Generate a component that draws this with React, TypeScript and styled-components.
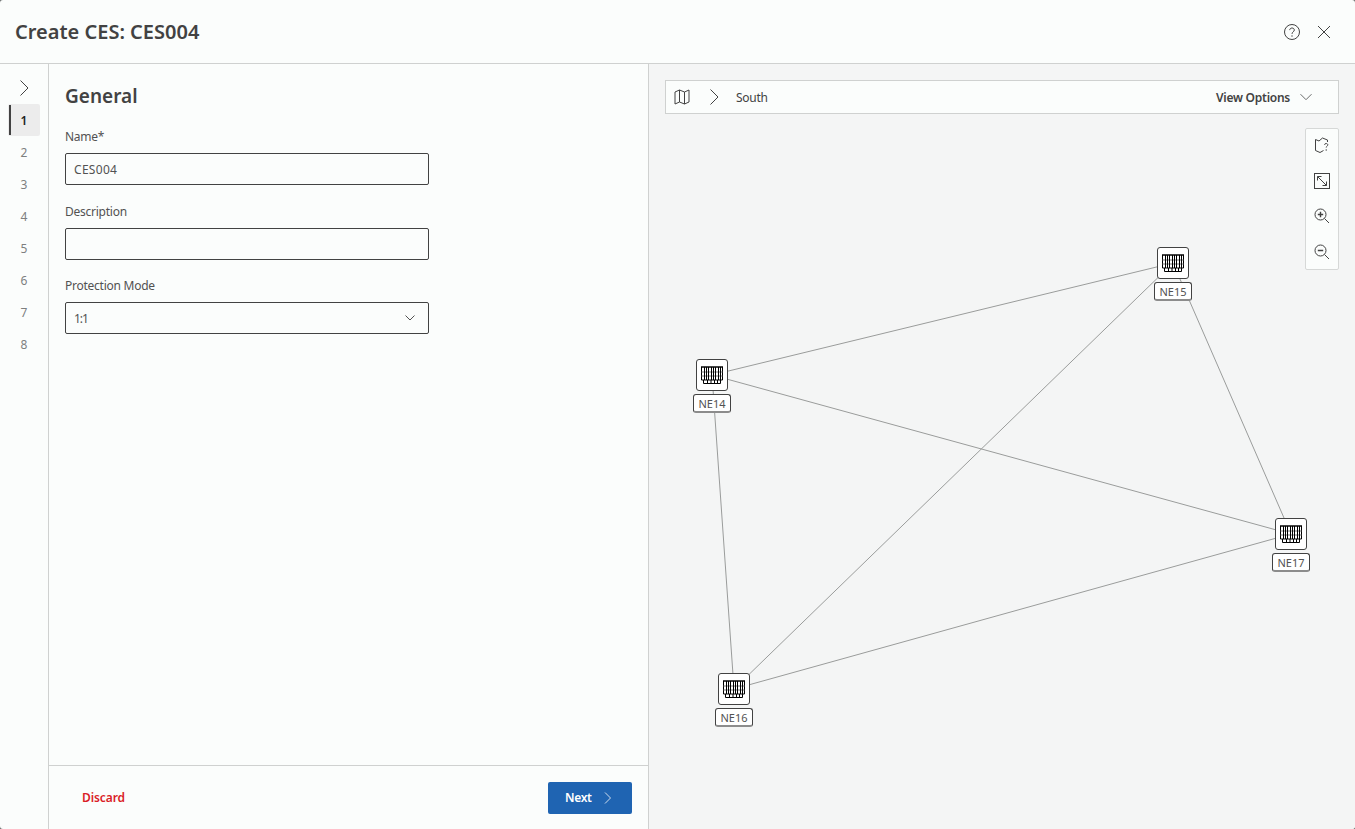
import React from 'react';
import styled, { createGlobalStyle } from 'styled-components';

const GlobalStyle = createGlobalStyle`
  html, body {
    margin: 0;
    padding: 0;
    height: 100%;
    background: #6b6e6e;
  }
  #root {
    height: 100%;
  }
  * {
    box-sizing: border-box;
  }
`;

const Dialog = styled.div`
  width: 1355px;
  height: 829px;
  display: flex;
  flex-direction: column;
  overflow: hidden;
  border-radius: 3px;
  background: #fbfdfc;
  color: #424242;
  font-family: 'Noto Sans', sans-serif;
`;

const Header = styled.header`
  height: 64px;
  flex: none;
  display: flex;
  align-items: center;
  justify-content: space-between;
  padding: 0 22px 0 15px;
  border-bottom: 1px solid #cfd1d0;
`;

const Title = styled.h1`
  margin: 0;
  font-size: 20px;
  line-height: 28px;
  font-weight: 600;
  color: #424242;
`;

const HeaderActions = styled.div`
  display: flex;
  align-items: center;
  gap: 14px;
`;

const IconButton = styled.span`
  display: flex;
  width: 18px;
  height: 18px;
  align-items: center;
  justify-content: center;
  color: #424242;
`;

const Body = styled.div`
  flex: 1;
  min-height: 0;
  display: flex;
`;

const StepRail = styled.nav`
  width: 49px;
  flex: none;
  border-right: 1px solid #cfd1d0;
  display: flex;
  flex-direction: column;
  align-items: center;
  padding: 8px 0 0 0;
`;

const RailToggle = styled.span`
  height: 32px;
  display: flex;
  align-items: center;
  justify-content: center;
  color: #424242;
`;

const Step = styled.div<{ $active?: boolean }>`
  position: relative;
  width: 32px;
  height: 32px;
  display: flex;
  align-items: center;
  justify-content: center;
  font-size: 12px;
  border-radius: 2px;
  font-weight: ${p => (p.$active ? 600 : 400)};
  color: ${p => (p.$active ? '#222' : '#7d7f7f')};
  background: ${p => (p.$active ? '#ececec' : 'transparent')};

  &::before {
    content: '';
    display: ${p => (p.$active ? 'block' : 'none')};
    position: absolute;
    left: 1px;
    top: 1px;
    bottom: 1px;
    width: 2px;
    background: #424242;
  }
`;

const FormPanel = styled.section`
  width: 600px;
  flex: none;
  border-right: 1px solid #cfd1d0;
  display: flex;
  flex-direction: column;
`;

const FormBody = styled.div`
  flex: 1;
  padding: 19px 16px 0;
`;

const SectionTitle = styled.h2`
  margin: 0 0 20px;
  font-size: 19px;
  line-height: 26px;
  font-weight: 600;
  color: #424242;
`;

const Field = styled.div`
  margin-bottom: 18.67px;
  width: 364px;
`;

const FieldLabel = styled.label`
  display: block;
  font-size: 12px;
  line-height: 16px;
  margin-bottom: 8px;
  letter-spacing: -0.25px;
  color: #525252;
`;

const Control = styled.div`
  height: 32px;
  display: flex;
  align-items: center;
  justify-content: space-between;
  padding: 0 12px 0 8px;
  border: 1px solid #424242;
  border-radius: 2px;
  font-size: 12px;
  color: #525252;
  background: #fbfdfc;
`;

const ControlValue = styled.span<{ $spacing: number }>`
  letter-spacing: ${p => p.$spacing}px;
`;

const Footer = styled.footer`
  height: 64px;
  flex: none;
  display: flex;
  align-items: center;
  justify-content: space-between;
  padding: 0 16px;
  border-top: 1px solid #cfd1d0;
`;

const DiscardButton = styled.button`
  border: 0;
  background: none;
  padding: 0 17px;
  height: 32px;
  font-family: inherit;
  font-size: 12px;
  font-weight: 600;
  letter-spacing: -0.1px;
  color: #da1e28;
`;

const NextButton = styled.button`
  width: 84px;
  height: 32px;
  display: flex;
  align-items: center;
  justify-content: flex-start;
  gap: 10px;
  padding: 0 0 0 17px;
  border: 0;
  border-radius: 2px;
  background: #1f64b2;
  font-family: inherit;
  font-size: 12px;
  font-weight: 600;
  letter-spacing: -0.3px;
  color: #fff;
`;

const NextChevron = styled.span`
  display: flex;
  color: #cfdcec;
`;

const MapPanel = styled.section`
  flex: 1;
  min-width: 0;
  position: relative;
  background: #f4f5f5;
  padding: 16px;
`;

const MapBar = styled.div`
  position: relative;
  z-index: 1;
  height: 34px;
  display: flex;
  align-items: center;
  padding: 0 26px 0 8px;
  background: #fbfdfc;
  border: 1px solid #cfd1d0;
  font-size: 12px;
  letter-spacing: -0.25px;
  color: #424242;
`;

const Crumb = styled.span`
  display: flex;
  align-items: center;
  color: #424242;
`;

const CrumbArrow = styled(Crumb)`
  margin-left: 16px;
`;

const CrumbLabel = styled.span`
  margin-left: 14px;
`;

const ViewOptions = styled.span`
  margin-left: auto;
  display: flex;
  align-items: center;
  gap: 10px;
  font-weight: 600;
`;

const ViewChevron = styled.span`
  display: flex;
  color: #6a6c6c;
`;

const ZoomTools = styled.div`
  position: absolute;
  top: 64px;
  right: 16px;
  z-index: 1;
  width: 34px;
  height: 142px;
  display: flex;
  flex-direction: column;
  align-items: center;
  justify-content: space-between;
  padding: 8px 0 9px;
  background: #fbfdfc;
  border: 1px solid #d6d8d7;
  border-radius: 2px;
  color: #424242;
`;

const Links = styled.svg`
  position: absolute;
  left: 0;
  top: 0;
  width: 706px;
  height: 765px;
`;

const Node = styled.div`
  position: absolute;
  width: 40px;
  display: flex;
  flex-direction: column;
  align-items: center;
  transform: translate(-20px, -16px);
`;

const NodeIcon = styled.div`
  width: 32px;
  height: 32px;
  display: flex;
  align-items: center;
  justify-content: center;
  background: #fff;
  border: 1px solid #424242;
  border-radius: 3px;
`;

const NodeLabel = styled.div`
  width: 38px;
  height: 19px;
  margin-top: 3px;
  display: flex;
  align-items: center;
  justify-content: center;
  background: #fff;
  border: 1px solid #424242;
  border-bottom-width: 2px;
  border-bottom-color: #8c8c8c;
  border-radius: 3px;
  font-size: 11px;
  color: #525252;
`;

const Chevron = () => (
  <svg width="16" height="16" viewBox="0 0 16 16" fill="none" stroke="currentColor" strokeWidth="1">
    <path d="M4.5.5 12 8l-7.5 7.5" />
  </svg>
);

const SmallChevron = () => (
  <svg width="12" height="12" viewBox="0 0 12 12" fill="none" stroke="currentColor" strokeWidth="1">
    <path d="M3 .5 8.5 6 3 11.5" />
  </svg>
);

const ChevronDown = () => (
  <svg width="12" height="12" viewBox="0 0 12 12" fill="none" stroke="currentColor" strokeWidth="1">
    <path d="M1.5 3.5 6 8l4.5-4.5" />
  </svg>
);

const WideChevronDown = () => (
  <svg width="12" height="8" viewBox="0 0 12 8" fill="none" stroke="currentColor" strokeWidth="1">
    <path d="M.5 1.2 6 6.7l5.5-5.5" />
  </svg>
);

const HelpIcon = () => (
  <svg width="18" height="18" viewBox="0 0 18 18" fill="none" stroke="currentColor" strokeWidth="1">
    <circle cx="9" cy="9" r="7.5" />
    <path d="M6.7 7.1C6.8 5.8 7.7 5 9 5c1.4 0 2.3.8 2.3 2 0 1.800-2.300 1.900-2.300 3.900" />
    <circle cx="9" cy="13" r=".7" fill="currentColor" stroke="none" />
  </svg>
);

const CloseIcon = () => (
  <svg width="14" height="14" viewBox="0 0 14 14" fill="none" stroke="currentColor" strokeWidth="1">
    <path d="M1 1l12 12M13 1 1 13" />
  </svg>
);

const MapIcon = () => (
  <svg width="16" height="16" viewBox="0 0 16 16" fill="none" stroke="currentColor" strokeWidth="1">
    <path d="M1 3 5.500 1l5 2L15 1v12l-4.500 2-5-2L1 15Z" />
    <path d="M5.500 1v12M10.500 3v12" />
  </svg>
);

const MapHelpIcon = () => (
  <svg width="16" height="16" viewBox="0 0 16 16" fill="none" stroke="currentColor" strokeWidth="1">
    <path d="M9.500 13.500 6 15.500 1.500 13.500V2.500L5 4 8.500 1 13.500 3V5" />
    <path d="M10.500 7.800C10.600 6.900 11.300 6.500 12.200 6.500c.9 0 1.600.6 1.600 1.400 0 1.200-1.600 1.300-1.600 2.600" />
    <circle cx="12.200" cy="13" r=".7" fill="currentColor" stroke="none" />
  </svg>
);

const FitIcon = () => (
  <svg width="16" height="16" viewBox="0 0 16 16" fill="none" stroke="currentColor" strokeWidth="1">
    <rect x=".5" y=".5" width="15" height="15" />
    <path d="M3.500 3.500l9 9M3.500 7.500v-4h4M12.500 8.500v4h-4" />
  </svg>
);

const ZoomIcon = ({ plus }: { plus?: boolean }) => (
  <svg width="16" height="16" viewBox="0 0 16 16" fill="none" stroke="currentColor" strokeWidth="1">
    <circle cx="6.500" cy="6.500" r="5.500" />
    <path d="M10.500 10.500 15 15" />
    <path d="M3.800 6.500h5.400" strokeWidth="1.400" />
    {plus && <path d="M6.500 3.800v5.400" strokeWidth="1.400" />}
  </svg>
);

const ShelfIcon = () => (
  <svg width="22" height="18" viewBox="0 0 22 18" fill="none" stroke="#000" strokeWidth="1">
    <path d="M0 1h22" strokeWidth="2" stroke="#444" />
    <path d="M.5 1v13h21V1" />
    <path d="M.5 6h21M.5 10h21" stroke="#777" />
    <path d="M3.500 1v13M5.500 1v13M7.500 1v13M10.500 1v13M12.500 1v13M14.500 1v13M17.500 1v13M19.500 1v13" />
    <path d="M2.500 14v3.500h17V14M6.500 14v3M10 14v3M13.500 14v3M16.500 14v3" />
  </svg>
);

// offsets are relative to the map panel, which starts at x=649, y=64
const nodes = [
  { name: 'NE14', x: 63, y: 311 },
  { name: 'NE15', x: 524, y: 199 },
  { name: 'NE16', x: 85, y: 625 },
  { name: 'NE17', x: 642, y: 470 },
];

const links = [
  [0, 1],
  [0, 2],
  [0, 3],
  [1, 2],
  [1, 3],
  [2, 3],
];

const steps = [1, 2, 3, 4, 5, 6, 7, 8];

export default function App() {
  return (
    <Dialog>
      <GlobalStyle />
      <Header>
        <Title>Create CES: CES004</Title>
        <HeaderActions>
          <IconButton><HelpIcon /></IconButton>
          <IconButton><CloseIcon /></IconButton>
        </HeaderActions>
      </Header>
      <Body>
        <StepRail>
          <RailToggle><Chevron /></RailToggle>
          {steps.map(s => (
            <Step key={s} $active={s === 1}>{s}</Step>
          ))}
        </StepRail>
        <FormPanel>
          <FormBody>
            <SectionTitle>General</SectionTitle>
            <Field>
              <FieldLabel>Name*</FieldLabel>
              <Control><ControlValue $spacing={0.3}>CES004</ControlValue></Control>
            </Field>
            <Field>
              <FieldLabel>Description</FieldLabel>
              <Control />
            </Field>
            <Field>
              <FieldLabel>Protection Mode</FieldLabel>
              <Control>
                <ControlValue $spacing={-1}>1:1</ControlValue>
                <ChevronDown />
              </Control>
            </Field>
          </FormBody>
          <Footer>
            <DiscardButton>Discard</DiscardButton>
            <NextButton>
              Next
              <NextChevron><SmallChevron /></NextChevron>
            </NextButton>
          </Footer>
        </FormPanel>
        <MapPanel>
          <Links viewBox="0 0 706 765">
            {links.map(([a, b]) => (
              <line
                key={`${a}-${b}`}
                x1={nodes[a].x}
                y1={nodes[a].y}
                x2={nodes[b].x}
                y2={nodes[b].y}
                stroke="#9a9c9b"
                strokeWidth="1"
              />
            ))}
          </Links>
          <MapBar>
            <Crumb><MapIcon /></Crumb>
            <CrumbArrow><Chevron /></CrumbArrow>
            <CrumbLabel>South</CrumbLabel>
            <ViewOptions>
              View Options
              <ViewChevron><WideChevronDown /></ViewChevron>
            </ViewOptions>
          </MapBar>
          <ZoomTools>
            <MapHelpIcon />
            <FitIcon />
            <ZoomIcon plus />
            <ZoomIcon />
          </ZoomTools>
          {nodes.map(n => (
            <Node key={n.name} style={{ left: n.x, top: n.y }}>
              <NodeIcon><ShelfIcon /></NodeIcon>
              <NodeLabel>{n.name}</NodeLabel>
            </Node>
          ))}
        </MapPanel>
      </Body>
    </Dialog>
  );
}
